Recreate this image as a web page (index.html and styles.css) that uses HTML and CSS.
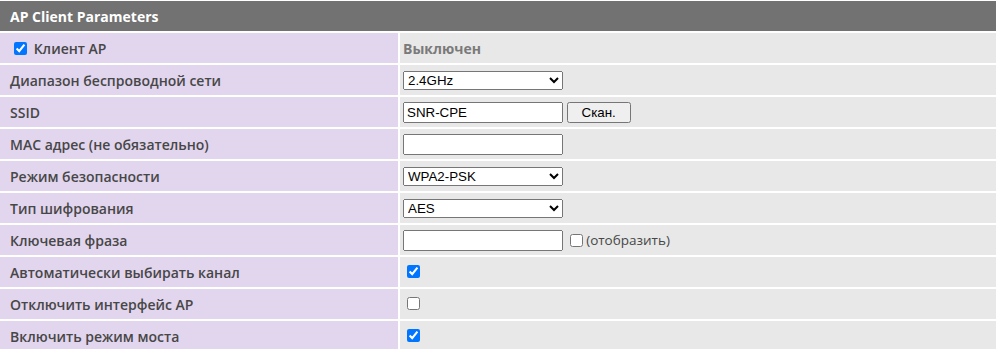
FILE: index.html
```html
<!DOCTYPE html>
<html lang="ru">
<head>
  <meta charset="UTF-8" />
  <title>AP Client Parameters</title>
  <link rel="stylesheet" href="styles.css">
</head>
<body>

  <!-- Параметры клиента AP -->
  <table class="params">
    <colgroup>
      <col class="col-label">
      <col>
    </colgroup>
    <tr>
      <td class="head" colspan="2">AP Client Parameters</td>
    </tr>
    <tr>
      <td class="label"><input type="checkbox" checked> Клиент AP</td>
      <td class="value"><span class="state">Выключен</span></td>
    </tr>
    <tr>
      <td class="label">Диапазон беспроводной сети</td>
      <td class="value">
        <select class="field">
          <option>2.4GHz</option>
          <option>5GHz</option>
        </select>
      </td>
    </tr>
    <tr>
      <td class="label">SSID</td>
      <td class="value">
        <input class="field" type="text" value="SNR-CPE">
        <button class="scan">Скан.</button>
      </td>
    </tr>
    <tr>
      <td class="label">MAC адрес (не обязательно)</td>
      <td class="value"><input class="field" type="text"></td>
    </tr>
    <tr>
      <td class="label">Режим безопасности</td>
      <td class="value">
        <select class="field">
          <option>WPA2-PSK</option>
          <option>WPA-PSK</option>
        </select>
      </td>
    </tr>
    <tr>
      <td class="label">Тип шифрования</td>
      <td class="value">
        <select class="field">
          <option>AES</option>
          <option>TKIP</option>
        </select>
      </td>
    </tr>
    <tr>
      <td class="label">Ключевая фраза</td>
      <td class="value">
        <input class="field" type="password">
        <label class="show"><input type="checkbox"> (отобразить)</label>
      </td>
    </tr>
    <tr>
      <td class="label">Автоматически выбирать канал</td>
      <td class="value"><input type="checkbox" checked></td>
    </tr>
    <tr>
      <td class="label">Отключить интерфейс AP</td>
      <td class="value"><input type="checkbox"></td>
    </tr>
    <tr>
      <td class="label">Включить режим моста</td>
      <td class="value"><input type="checkbox" checked></td>
    </tr>
  </table>

</body>
</html>
```

FILE: styles.css
```css
body {
  margin: 0;
  background: #fff;
  font-family: 'Open Sans', sans-serif;
  font-size: 14px;
  color: #474747;
}

/* Таблица параметров */
.params {
  width: 996px;
  table-layout: fixed;
  border-collapse: separate;
  border-spacing: 0 2px;
  margin-top: -1px;
}

.col-label {
  width: 400px;
}

.params td {
  height: 30px;
  padding: 0 0 0 10px;
  box-sizing: border-box;
}

.params .head {
  background: #727272;
  color: #fff;
  font-weight: 700;
}

.params .label {
  background: #e2d5ee;
  font-weight: 600;
  border-right: 2px solid #fff;
}

.params .label input {
  margin: 0 3px 0 4px;
  vertical-align: -1px;
}

.params .value {
  background: #e8e8e8;
  padding-left: 3px;
}

.state {
  color: #7a7a7a;
  font-weight: 700;
}

/* Поля ввода */
.field {
  width: 160px;
  box-sizing: border-box;
  font-family: 'Liberation Sans', Arial, sans-serif;
  font-size: 13.33px;
  vertical-align: middle;
}

select.field {
  height: 19px;
}

input.field {
  height: 21px;
}

.value > input[type="checkbox"] {
  margin: 3px 3px 3px 4px;
}

.scan {
  width: 64px;
  height: 21px;
  font-family: 'Liberation Sans', Arial, sans-serif;
  font-size: 13.33px;
  vertical-align: middle;
}

.show {
  font-size: 13.5px;
  vertical-align: middle;
}

.show input {
  margin: 0 0 0 3px;
  vertical-align: -2px;
}
```
